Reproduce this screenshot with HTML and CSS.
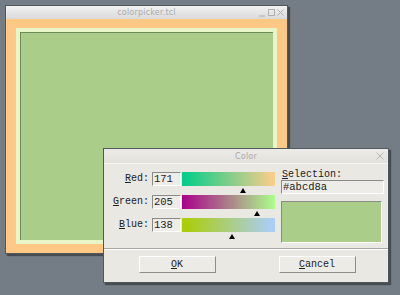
FILE: index.html
```html
<!DOCTYPE html>
<html>
<head>
<meta charset="utf-8">
<link rel="stylesheet" href="styles.css">
</head>
<body>
<div class="desktop">
  <div class="win main">
    <div class="titlebar">
      <span class="title">colorpicker.tcl</span>
      <span class="wbtns">
        <svg width="26" height="9" viewBox="0 0 26 9"><path d="M1 8h6" stroke="#b0b0b0" fill="none"/><rect x="10.5" y="1.5" width="6" height="6" stroke="#b0b0b0" fill="none"/><path d="M19.5 1.5l6 6M25.5 1.5l-6 6" stroke="#b0b0b0" fill="none"/></svg>
      </span>
    </div>
    <div class="frame">
      <div class="inner"><div class="swatchbig"></div></div>
    </div>
  </div>

  <div class="win dialog">
    <div class="titlebar dtitle">
      <span class="title">Color</span>
      <svg class="close" width="8" height="8" viewBox="0 0 8 8"><path d="M0.5 0.5l7 7M7.5 0.5l-7 7" stroke="#b8b8b8" fill="none"/></svg>
    </div>
    <div class="dbody">
      <div class="controls">
        <div class="row">
          <span class="lbl"><u>R</u>ed:</span>
          <span class="entry">171</span>
          <div class="slider"><div class="grad red"></div><span class="mark" style="left:58px"></span></div>
        </div>
        <div class="row">
          <span class="lbl"><u>G</u>reen:</span>
          <span class="entry">205</span>
          <div class="slider"><div class="grad green"></div><span class="mark" style="left:72px"></span></div>
        </div>
        <div class="row">
          <span class="lbl"><u>B</u>lue:</span>
          <span class="entry">138</span>
          <div class="slider"><div class="grad blue"></div><span class="mark" style="left:47px"></span></div>
        </div>
      </div>
      <div class="sel">
        <span class="lbl"><u>S</u>election:</span>
        <span class="entry wide">#abcd8a</span>
        <div class="preview"></div>
      </div>
    </div>
    <div class="sep"></div>
    <div class="buttons">
      <button class="btn"><u>O</u>K</button>
      <button class="btn"><u>C</u>ancel</button>
    </div>
  </div>
</div>
</body>
</html>
```

FILE: styles.css
```css
html, body {
  margin: 0;
  padding: 0;
}
body {
  background: #747d86;
  width: 400px;
  height: 295px;
  overflow: hidden;
  font-family: "Liberation Mono", "DejaVu Sans Mono", monospace;
}
.desktop {
  position: relative;
  width: 400px;
  height: 295px;
}
.win {
  position: absolute;
  box-sizing: border-box;
  display: flex;
  flex-direction: column;
  border: 1px solid #50575d;
  box-shadow: 2px 2px 1px rgba(40,44,48,0.6);
}
.main {
  left: 5px;
  top: 5px;
  width: 283px;
  height: 249px;
  background: #ffc985;
}
.titlebar {
  position: relative;
  height: 13px;
  flex: none;
  display: flex;
  align-items: center;
  justify-content: center;
  background: linear-gradient(#f2f2f2, #dadada);
  font-family: "DejaVu Sans", sans-serif;
  font-size: 8px;
  color: #a8a8a8;
}
.title {
  letter-spacing: 0.2px;
}
.wbtns {
  position: absolute;
  right: 3px;
  top: 2px;
  display: flex;
}
.frame {
  flex: 1;
  padding: 9px 10px 9px 10px;
  display: flex;
}
.inner {
  flex: 1;
  border: 4px solid #e8f5c8;
  display: flex;
}
.swatchbig {
  flex: 1;
  background: #abcd8a;
  border-top: 1px solid #6e8a58;
  border-left: 1px solid #6e8a58;
}
.dialog {
  left: 103px;
  top: 148px;
  width: 286px;
  height: 135px;
  background: #e9e8e3;
}
.dtitle {
  height: 14px;
  background: linear-gradient(#ecebe7, #e2e1dc);
  border-bottom: 1px solid #f6f6f4;
}
.close {
  position: absolute;
  right: 4px;
  top: 3px;
}
.dbody {
  display: flex;
  padding: 7px 4px 0 0;
  height: 77px;
}
.controls {
  display: flex;
  flex-direction: column;
  gap: 8px;
  padding-top: 1px;
}
.row {
  display: flex;
  align-items: flex-start;
  height: 15px;
}
.lbl {
  font-size: 10px;
  color: #202020;
  line-height: 14px;
}
.row .lbl {
  width: 45px;
  text-align: right;
  margin-right: 3px;
}
.entry {
  box-sizing: border-box;
  height: 14px;
  width: 29px;
  background: #edece8;
  border-top: 1px solid #8a8a86;
  border-left: 1px solid #8a8a86;
  border-bottom: 1px solid #ffffff;
  border-right: 1px solid #ffffff;
  font-size: 10.5px;
  line-height: 12px;
  color: #202020;
  padding-left: 1px;
}
.slider {
  position: relative;
  margin-left: 1px;
  width: 93px;
  height: 14px;
}
.grad {
  height: 14px;
}
.red { background: linear-gradient(to right, #00cd8a, #ffcd8a); }
.green { background: linear-gradient(to right, #ab008a, #abff8a); }
.blue { background: linear-gradient(to right, #abcd00, #abcdff); }
.mark {
  position: absolute;
  top: 16px;
  width: 0;
  height: 0;
  border-left: 3px solid transparent;
  border-right: 3px solid transparent;
  border-bottom: 5px solid #000;
}
.sel {
  display: flex;
  flex-direction: column;
  margin-left: 6px;
  flex: 1;
}
.sel .lbl {
  margin-left: 1px;
  height: 10px;
  line-height: 11px;
  margin-top: -2px;
}
.entry.wide {
  width: 103px;
  height: 14px;
  margin-top: 1px;
}
.preview {
  margin-top: 7px;
  width: 101px;
  height: 42px;
  flex: none;
  background: #abcd8a;
  box-sizing: border-box;
  border-top: 1px solid #8a8a86;
  border-left: 1px solid #8a8a86;
  border-bottom: 1px solid #ffffff;
  border-right: 1px solid #ffffff;
}
.sep {
  height: 0;
  border-top: 1px solid #a8a7a2;
  border-bottom: 1px solid #ffffff;
}
.buttons {
  display: flex;
  justify-content: space-around;
  padding: 6px 32px 0 34px;
  gap: 62px;
}
.btn {
  width: 77px;
  height: 17px;
  padding: 0;
  background: #ecebe6;
  border-top: 1px solid #ffffff;
  border-left: 1px solid #ffffff;
  border-right: 1px solid #8e8d88;
  border-bottom: 1px solid #8e8d88;
  font-family: "Liberation Mono", monospace;
  font-size: 10px;
  color: #202020;
}
```
